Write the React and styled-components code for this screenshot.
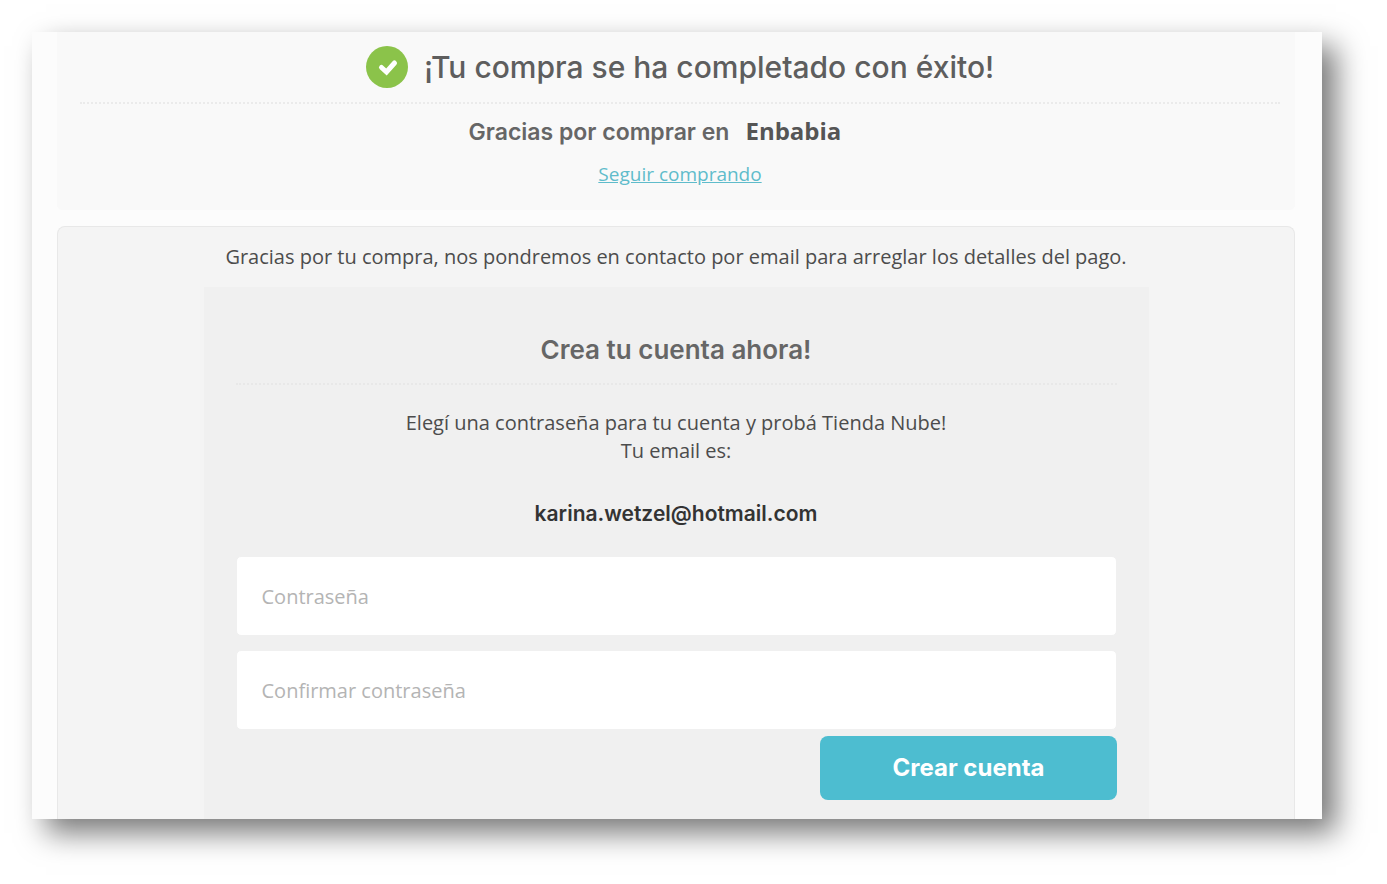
import React from "react"
import styled, { createGlobalStyle } from "styled-components"

const GlobalStyle = createGlobalStyle`
  * {
    box-sizing: border-box;
  }

  body {
    margin: 0;
    background: #fff;
    color: #4c4c4c;
    font-family: 'Open Sans', 'Noto Sans', sans-serif;
    font-size: 20px;
    line-height: 28px;
  }
`

const Page = styled.div`
  padding: 32px 65px 65px 32px;
`

const Sheet = styled.main`
  padding: 0 27px 0 25px;
  background: #fcfcfc;
  box-shadow: 14px 14px 28px rgba(0, 0, 0, 0.53);
`

const Success = styled.header`
  display: flex;
  flex-direction: column;
  padding: 14px 15px 22px 23px;
  border-radius: 0 0 5px 5px;
  background: #f9f9f9;
  text-align: center;
`

const TitleRow = styled.div`
  display: flex;
  align-items: center;
  justify-content: center;
  gap: 16px;
  padding-bottom: 14px;
  border-bottom: 2px dotted #ebebeb;
`

const CheckBadge = styled.svg`
  width: 42px;
  height: 42px;
  border-radius: 50%;
  background: #8bc34a;
  fill: none;
  stroke: #fff;
  stroke-width: 5;
  stroke-linecap: round;
`

const Title = styled.h1`
  margin: 0;
  color: #5e5e5e;
  font-family: Inter, sans-serif;
  font-size: 30px;
  font-weight: 500;
  line-height: 42px;
`

const Thanks = styled.p`
  display: flex;
  align-items: baseline;
  justify-content: center;
  gap: 16px;
  margin: 13px 0 14px;
  color: #666;
  font-family: Inter, sans-serif;
  font-size: 23px;
  font-weight: 600;
`

const StoreName = styled.strong`
  min-width: 146px;
  color: #555;
  font-family: 'Open Sans', 'Noto Sans', sans-serif;
  font-size: 24px;
  font-weight: 700;
  text-align: left;
`

const ShopLink = styled.a`
  align-self: center;
  color: #5fbccb;
  font-size: 19px;
`

const Details = styled.section`
  margin-top: 16px;
  padding: 16px 24px 0;
  border: 1px solid #e8e8e8;
  border-bottom: 0;
  border-radius: 8px 8px 0 0;
  background: #f4f4f4;
  text-align: center;
`

const Notice = styled.p`
  margin: 0 0 16px;
`

const AccountForm = styled.form`
  display: flex;
  flex-direction: column;
  max-width: 945px;
  margin: 0 auto;
  padding: 42px 32px 19px;
  background: #f0f0f0;
`

const FormTitle = styled.h2`
  margin: 0 0 24px;
  padding-bottom: 12px;
  border-bottom: 2px dotted #e8e8e8;
  color: #666;
  font-family: Inter, sans-serif;
  font-size: 26px;
  font-weight: 600;
  line-height: 42px;
`

const Text = styled.p`
  margin: 0;
`

const Email = styled.p`
  margin: 35px 0 28px;
  color: #333;
  font-family: Inter, sans-serif;
  font-size: 21px;
  font-weight: 600;
`

const Field = styled.input`
  width: 100%;
  height: 80px;
  margin-bottom: ${props => props.$gap}px;
  padding: 0 25px;
  border: 1px solid #f0f0f0;
  border-radius: 5px;
  background: #fff;
  color: #4c4c4c;
  font: inherit;

  &::placeholder {
    color: #b4b4b4;
    opacity: 1;
  }
`

const SubmitButton = styled.button`
  align-self: flex-end;
  padding: 11px 72px;
  border: 0;
  border-radius: 8px;
  background: #4dbdd0;
  color: #fff;
  font-family: Inter, sans-serif;
  font-size: 24px;
  font-weight: 700;
  line-height: 42px;
`

export default () => (
  <Page>
    <GlobalStyle />
    <Sheet>
      <Success>
        <TitleRow>
          <CheckBadge viewBox="0 0 42 42" aria-hidden="true">
            <path d="M15.5 21.5l5 4.5 8-9" />
          </CheckBadge>
          <Title>¡Tu compra se ha completado con éxito!</Title>
        </TitleRow>
        <Thanks>
          Gracias por comprar en
          <StoreName>Enbabia</StoreName>
        </Thanks>
        <ShopLink href="#">Seguir comprando</ShopLink>
      </Success>
      <Details>
        <Notice>
          Gracias por tu compra, nos pondremos en contacto por email para arreglar los detalles del pago.
        </Notice>
        <AccountForm>
          <FormTitle>Crea tu cuenta ahora!</FormTitle>
          <Text>Elegí una contraseña para tu cuenta y probá Tienda Nube!</Text>
          <Text>Tu email es:</Text>
          <Email>karina.wetzel@hotmail.com</Email>
          <Field type="password" placeholder="Contraseña" aria-label="Contraseña" $gap={14} />
          <Field
            type="password"
            placeholder="Confirmar contraseña"
            aria-label="Confirmar contraseña"
            $gap={6}
          />
          <SubmitButton type="button">Crear cuenta</SubmitButton>
        </AccountForm>
      </Details>
    </Sheet>
  </Page>
)
